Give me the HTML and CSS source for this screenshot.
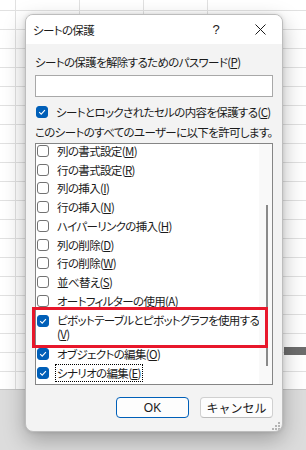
FILE: index.html
```html
<!DOCTYPE html>
<html lang="ja">
<head>
    <meta charset="utf-8">
    <title>シートの保護</title>
    <link rel="stylesheet" href="styles.css">
</head>
<body>
    <div class="dialog">
        <div class="titlebar">
            <span class="title">シートの保護</span>
            <span class="help">?</span>
            <span class="close">
                <svg width="11" height="11" viewBox="0 0 11 11"><path d="M0.5 0.5L10.5 10.5M10.5 0.5L0.5 10.5" stroke="#1b1b1b" stroke-width="1"/></svg>
            </span>
        </div>

        <div class="content">
            <div class="label">シートの保護を解除するためのパスワード(<u>P</u>)</div>
            <div class="password"></div>

            <div class="check-row">
                <span class="box on"><svg width="10" height="10" viewBox="0 0 10 10"><polyline points="2.2,5.1 4.2,7.1 7.9,3.1" fill="none" stroke="#fff" stroke-width="1.1"/></svg></span>
                <span>シートとロックされたセルの内容を保護する(<u>C</u>)</span>
            </div>

            <div class="label allow">このシートのすべてのユーザーに以下を許可します。</div>

            <div class="listbox">
                <div class="items">
                    <div class="item"><span class="box"></span><span>列の書式設定(<u>M</u>)</span></div>
                    <div class="item"><span class="box"></span><span>行の書式設定(<u>R</u>)</span></div>
                    <div class="item"><span class="box"></span><span>列の挿入(<u>I</u>)</span></div>
                    <div class="item"><span class="box"></span><span>行の挿入(<u>N</u>)</span></div>
                    <div class="item"><span class="box"></span><span>ハイパーリンクの挿入(<u>H</u>)</span></div>
                    <div class="item"><span class="box"></span><span>列の削除(<u>D</u>)</span></div>
                    <div class="item"><span class="box"></span><span>行の削除(<u>W</u>)</span></div>
                    <div class="item"><span class="box"></span><span>並べ替え(<u>S</u>)</span></div>
                    <div class="item"><span class="box"></span><span>オートフィルターの使用(<u>A</u>)</span></div>
                    <div class="item tall">
                        <span class="box on"><svg width="10" height="10" viewBox="0 0 10 10"><polyline points="2.2,5.1 4.2,7.1 7.9,3.1" fill="none" stroke="#fff" stroke-width="1.1"/></svg></span>
                        <span class="wrap"><span class="line">ピボットテーブルとピボットグラフを使用する</span><span class="line">(<u>V</u>)</span></span>
                    </div>
                    <div class="item">
                        <span class="box on"><svg width="10" height="10" viewBox="0 0 10 10"><polyline points="2.2,5.1 4.2,7.1 7.9,3.1" fill="none" stroke="#fff" stroke-width="1.1"/></svg></span>
                        <span>オブジェクトの編集(<u>O</u>)</span>
                    </div>
                    <div class="item">
                        <span class="box on"><svg width="10" height="10" viewBox="0 0 10 10"><polyline points="2.2,5.1 4.2,7.1 7.9,3.1" fill="none" stroke="#fff" stroke-width="1.1"/></svg></span>
                        <span class="focus">シナリオの編集(<u>E</u>)</span>
                    </div>
                </div>
                <div class="scrollbar"><div class="thumb"></div></div>
            </div>

            <div class="buttons">
                <button class="btn primary">OK</button>
                <button class="btn">キャンセル</button>
            </div>
        </div>

        <div class="highlight"></div>
        <svg class="grip" width="8" height="8" viewBox="0 0 8 8">
            <rect x="6" y="0" width="2" height="2" fill="#b4b4b4"/>
            <rect x="3" y="3" width="2" height="2" fill="#b4b4b4"/>
            <rect x="6" y="3" width="2" height="2" fill="#b4b4b4"/>
            <rect x="0" y="6" width="2" height="2" fill="#b4b4b4"/>
            <rect x="3" y="6" width="2" height="2" fill="#b4b4b4"/>
            <rect x="6" y="6" width="2" height="2" fill="#b4b4b4"/>
        </svg>
    </div>
</body>
</html>
```

FILE: styles.css
```css
* {
    box-sizing: border-box;
}

body {
    margin: 0;
    width: 306px;
    height: 450px;
    overflow: hidden;
    padding: 14px 0 0 25px;
    font-family: "Noto Sans CJK JP", "Noto Sans", sans-serif;
    font-size: 11.5px;
    letter-spacing: -0.65px;
    color: #1b1b1b;
    font-feature-settings: "palt";
    background-color: #fff;
    background-image:
        linear-gradient(#6d6d6d, #6d6d6d),
        linear-gradient(to bottom, transparent 389px, #c6c6c6 389px, #c6c6c6 390px, #dcdcdc 390px),
        repeating-linear-gradient(to bottom, transparent 0 18px, #e1e1e1 18px 19px),
        repeating-linear-gradient(to right, transparent 0 63px, #e1e1e1 63px 64px);
    background-repeat: no-repeat, no-repeat, repeat, repeat;
    background-position: 284px 347px, 0 0, 0 -8px, -48px 0;
    background-size: 22px 8px, 100% 100%, auto, auto;
}

.dialog {
    position: relative;
    width: 258px;
    height: 418px;
    background: #f3f3f3;
    border: 1px solid #bdbdbd;
    border-radius: 8px;
    overflow: hidden;
    box-shadow: 0 8px 22px rgba(0, 0, 0, 0.28), 0 0 4px rgba(0, 0, 0, 0.12);
}

.titlebar {
    display: flex;
    align-items: center;
    height: 29px;
    background: #fff;
    padding-left: 7px;
}

.title {
    flex: 1;
}

.help {
    font-family: "Liberation Sans", sans-serif;
    font-size: 13px;
    margin-right: 36px;
}

.close {
    display: flex;
    margin-right: 16px;
}

.content {
    padding: 10px 9px 0;
}

.label {
    line-height: 16px;
    white-space: nowrap;
}

.password {
    margin-top: 5px;
    height: 22px;
    background: #fff;
    border: 1px solid #a8a8a8;
}

.check-row {
    display: flex;
    align-items: center;
    gap: 8px;
    height: 16px;
    margin-top: 7px;
    padding-left: 1px;
    white-space: nowrap;
}

.allow {
    margin-top: 4px;
}

.box {
    flex: none;
    display: flex;
    align-items: center;
    justify-content: center;
    width: 12px;
    height: 12px;
    border: 1px solid #727272;
    border-radius: 3px;
    background: #fff;
}

.box.on {
    background: #005fb8;
    border-color: #005fb8;
}

.listbox {
    display: flex;
    margin-top: 3px;
    height: 242px;
    background: #fff;
    border: 1px solid #858585;
    overflow: hidden;
}

.items {
    flex: 1;
    margin-top: -2.4px;
}

.item {
    display: flex;
    align-items: center;
    gap: 8px;
    height: 18.75px;
    padding-left: 1px;
    white-space: nowrap;
}

.item.tall {
    align-items: flex-start;
    height: 34.3px;
    padding-top: 3px;
}

.item.tall .box {
    margin-top: 2px;
}

.wrap {
    display: flex;
    flex-direction: column;
}

.line {
    height: 14px;
    line-height: 14px;
}

.focus {
    margin-left: -2px;
    padding: 0 1px;
    line-height: 16px;
    border: 1px dotted #000;
}

.scrollbar {
    width: 16px;
    background: #f9f9f9;
    padding: 61px 0 0 7px;
}

.thumb {
    width: 2px;
    height: 161px;
    background: #8a8a8a;
}

.buttons {
    display: flex;
    justify-content: flex-end;
    gap: 11px;
    margin-top: 12px;
}

.btn {
    width: 73px;
    height: 21px;
    padding: 0;
    font-family: inherit;
    font-size: 12px;
    letter-spacing: 0;
    color: #1b1b1b;
    background: #fdfdfd;
    border: 1px solid #d0d0d0;
    border-bottom-color: #bcbcbc;
    border-radius: 4px;
}

.btn.primary {
    border: 1px solid #005fb8;
    font-family: "Liberation Sans", sans-serif;
}

.highlight {
    position: absolute;
    left: 6px;
    top: 292px;
    width: 236px;
    height: 41px;
    border: 3px solid #e8172b;
}

.grip {
    position: absolute;
    right: 2px;
    bottom: 1px;
}
```
